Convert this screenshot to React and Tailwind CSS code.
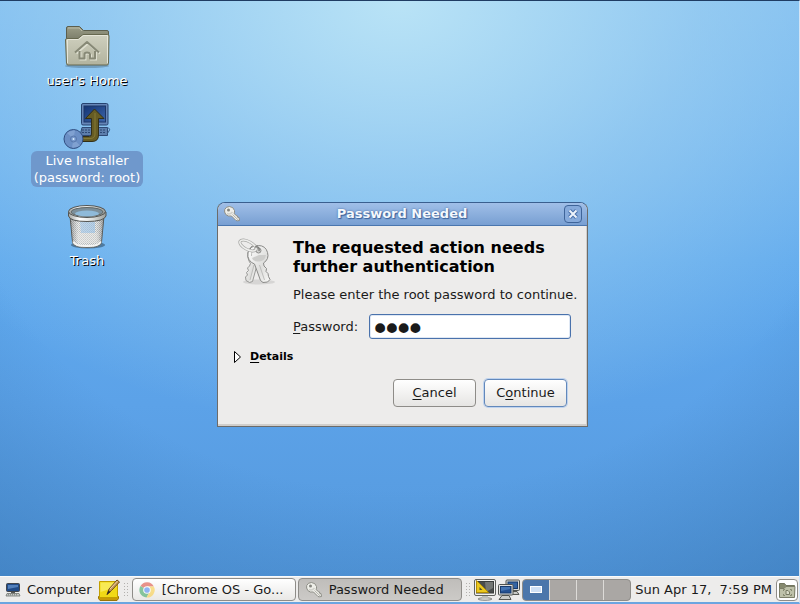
import React from "react";

function FolderHomeIcon() {
  return (
    <svg width="48" height="48" viewBox="0 0 48 48" aria-hidden="true">
      <defs>
        <linearGradient id="folderFront" x1="0" y1="0" x2="0" y2="1">
          <stop offset="0" stopColor="#cfd0bf" />
          <stop offset="1" stopColor="#b2b39e" />
        </linearGradient>
        <linearGradient id="folderBack" x1="0" y1="0" x2="0" y2="1">
          <stop offset="0" stopColor="#9c9e88" />
          <stop offset="1" stopColor="#6d6f5c" />
        </linearGradient>
      </defs>
      <ellipse cx="24" cy="43" rx="22" ry="2" fill="#00000033" />
      <path d="M3.500 22V5Q3.500 3.500 5 3.500H16.500L20.500 7.500H44Q45.500 7.500 45.500 9V22Z" fill="url(#folderBack)" stroke="#5c5e4d" />
      <path d="M5 5H16L19 8" fill="none" stroke="#b9baa6" />
      <path d="M2.500 17Q2.500 15.500 4 15.500H15L20 11.500H44.500Q46 11.500 46 13L45.500 40.500Q45.500 42 44 42H5Q3.500 42 3.500 40.500Z" fill="url(#folderFront)" stroke="#66684f" />
      <path d="M4.500 40V16.500H15.500L20.500 12.500H44.500V40" fill="none" stroke="#e6e6d9" />
      <path d="M12.500 29.500 24 19.500 36 29.500M16.500 28V35.500H21.500V31Q21.500 29.500 24 29.500T27 31V35.500H32V28" fill="none" stroke="#dedfd0" strokeWidth="2" transform="translate(1 1)" />
      <path d="M12 29.500 24 19 36 29.500M16.500 28V35.500H21.500V31Q21.500 29.500 24 29.500T27 31V35.500H32V28" fill="none" stroke="#878976" strokeWidth="2" strokeLinejoin="round" />
    </svg>
  );
}

function InstallerIcon() {
  return (
    <svg width="48" height="48" viewBox="0 0 48 48" aria-hidden="true">
      <defs>
        <linearGradient id="screen" x1="0" y1="0" x2="1" y2="1">
          <stop offset="0" stopColor="#143474" />
          <stop offset="1" stopColor="#3c65a9" />
        </linearGradient>
      </defs>
      <path d="M19 25.500H44.500V33.500H17Z" fill="#5d7eac" stroke="#2e4a75" />
      <path d="M19 28H43M19 30.500H43" stroke="#2e4a75" strokeDasharray="2 1" />
      <path d="M44 26Q48 26 46 29T44 32" fill="none" stroke="#3c5b88" />
      <rect x="18.500" y="1.500" width="26.500" height="21.500" rx="1.500" fill="#6585b7" stroke="#26426f" />
      <rect x="21" y="4" width="21.500" height="16" fill="url(#screen)" stroke="#1c3667" />
      <path d="M14 34.500H26.500Q28.500 34.500 28.500 32V16.500H22.500L31.500 7 41 16.500H35.500V33Q35.500 39.500 29 39.500H14Z" fill="#665c23" stroke="#332f17" />
      <path d="M17 36.500H27Q32 36.500 32 32V11" fill="none" stroke="#837834" />
      <circle cx="10.500" cy="37" r="9.500" fill="#6b8fc5" stroke="#304d80" />
      <path d="M10.500 37 4 31Q8 28 12 28.500ZM10.500 37 17 43.500Q13 46 9 45.500Z" fill="#80a1d1" />
      <circle cx="10.500" cy="37" r="3" fill="#7799cc" stroke="#5777ab" />
      <circle cx="10.500" cy="37" r="1" fill="#d7ecff" />
    </svg>
  );
}

function TrashIcon() {
  return (
    <svg width="48" height="48" viewBox="0 0 48 48" aria-hidden="true">
      <defs>
        <pattern id="mesh" width="2" height="2" patternUnits="userSpaceOnUse">
          <rect width="2" height="2" fill="#e6e7e6" />
          <rect width="1" height="1" fill="#a0a4a5" />
          <rect x="1" y="1" width="1" height="1" fill="#aeb3b5" />
        </pattern>
        <linearGradient id="shade" x1="0" x2="1" y1="0" y2="0">
          <stop offset="0" stopColor="#555555" stopOpacity="0.500" />
          <stop offset="0.250" stopColor="#ffffff" stopOpacity="0.300" />
          <stop offset="0.750" stopColor="#ffffff" stopOpacity="0.200" />
          <stop offset="1" stopColor="#555555" stopOpacity="0.500" />
        </linearGradient>
        <linearGradient id="rim" x1="0" x2="1" y1="0" y2="0">
          <stop offset="0" stopColor="#a3a5a2" />
          <stop offset="0.300" stopColor="#ffffff" />
          <stop offset="0.650" stopColor="#dcdedb" />
          <stop offset="1" stopColor="#999c98" />
        </linearGradient>
      </defs>
      <ellipse cx="25" cy="42" rx="17" ry="3.500" fill="#00000055" />
      <path d="M7 13 9.500 39Q10 44.500 24 44.500T38.500 39L41 13Z" fill="url(#mesh)" stroke="#535654" />
      <path d="M17 19H32V30H18Z" fill="#7db2e2" fillOpacity="0.600" />
      <path d="M13 30H36V40H14Z" fill="#dededa" fillOpacity="0.400" />
      <path d="M7 13 9.500 39Q10 44.500 24 44.500T38.500 39L41 13Z" fill="url(#shade)" />
      <path d="M10.500 38.500Q11 43 24 43T37.500 38.500" fill="none" stroke="#f4f4f2" strokeWidth="2" />
      <path d="M5.500 9V13Q7 18.500 24 18.500T43 13V9Z" fill="url(#rim)" stroke="#525452" />
      <ellipse cx="24" cy="8.500" rx="18.500" ry="6" fill="url(#rim)" stroke="#525452" />
      <ellipse cx="24" cy="9" rx="16" ry="4.500" fill="#7c8f9a" stroke="#616664" />
      <ellipse cx="24" cy="10.500" rx="12" ry="3" fill="#8fbad9" />
    </svg>
  );
}

function KeyIcon() {
  return (
    <svg width="16" height="16" viewBox="0 0 16 16" className="shrink-0" aria-hidden="true">
      <path d="M5.500 0.500Q9.500 0.800 10.500 4.500Q10.800 6.200 10 7.500L12.300 9.500L13.300 9.800L13.500 11.200L15 11.500L15.500 14.500L13.500 14.800L12 14.500L7.500 10Q4 10.800 1.800 8.500Q0 6 0.700 3.500Q2 0.500 5.500 0.500Z" fill="#efefe9" stroke="#8d8d86" />
      <path d="M8.500 8.500 14 13.800" stroke="#b3b2ab" />
      <path d="M3 7.500Q6 9 8.500 6" stroke="#cfcfc9" strokeWidth="1.500" fill="none" />
      <circle cx="4.500" cy="4" r="1.500" fill="#85857f" />
    </svg>
  );
}

function KeyPairIcon() {
  return (
    <svg width="48" height="48" viewBox="0 0 48 48" className="shrink-0" aria-hidden="true">
      <defs>
        <linearGradient id="steel" x1="0" y1="0" x2="1" y2="1">
          <stop offset="0" stopColor="#ffffff" />
          <stop offset="0.600" stopColor="#dededc" />
          <stop offset="1" stopColor="#f8f8f6" />
        </linearGradient>
      </defs>
      <ellipse cx="26" cy="44" rx="16" ry="2.500" fill="#00000018" />
      <path d="M19 8Q12 14 16 23L17.500 25.500 16.500 28 14.500 30 15.500 32.500 13.500 34.500 14.500 37 12.500 39 13 42.500 16.500 44.500 19.500 43.500 24 27Z" fill="url(#steel)" stroke="#989896" />
      <path d="M21 27 17 42" stroke="#bcbcba" />
      <path d="M25.500 7.500A9.500 9.500 0 0 0 21.500 26L27.500 42.500 30 44.500 34.500 44 37 41.500 35.500 38.500 35 35.500 33 33.500 33.500 30.500 31 28 30.500 25A9.500 9.500 0 0 0 25.500 7.500Z" fill="url(#steel)" stroke="#8a8a88" />
      <path d="M26.500 27 31.500 42M23 9.500Q18 12 18.500 18" stroke="#bdbdbb" fill="none" />
      <path d="M19 20 26 17 33 17Q32 23 26 23.500T19 20Z" fill="#cdcdcb" />
      <circle cx="25.500" cy="12.500" r="2.500" fill="#d0d0ce" stroke="#8d8d8b" />
      <ellipse cx="15" cy="7.500" rx="9" ry="4" transform="rotate(28 15 7.500)" fill="none" stroke="#a9a9a7" strokeWidth="3" />
      <ellipse cx="15" cy="7.500" rx="9" ry="4" transform="rotate(28 15 7.500)" fill="none" stroke="#efefed" strokeWidth="1.500" />
      <path d="M22 9Q27 8 26 13" fill="none" stroke="#80807e" strokeWidth="1.500" />
    </svg>
  );
}

function ComputerIcon() {
  return (
    <svg width="16" height="16" viewBox="0 0 16 16" className="shrink-0" aria-hidden="true">
      <rect x="1.500" y="1.500" width="13" height="8" rx="1" fill="#204a87" stroke="#42454a" />
      <path d="M3 3H13V5L3 7Z" fill="#527fba" />
      <path d="M6 10H10V11.500H6Z" fill="#555753" />
      <path d="M2 11.500H14L15 14H1Z" fill="#c9ccc8" stroke="#70736f" strokeWidth="0.800" />
      <path d="M3 12.800H13" stroke="#777a76" strokeDasharray="1 1" />
    </svg>
  );
}

function NotesIcon() {
  return (
    <svg width="24" height="24" viewBox="0 0 24 24" aria-hidden="true">
      <path d="M1.500 18.500H21.500V20.500L20 22.500H3L1.500 20.500Z" fill="#c79a08" stroke="#9a7404" />
      <path d="M2.500 3.500H20.500V19.500H2.500Z" fill="#f1d916" stroke="#c4a000" />
      <path d="M3.500 4.500H19.500V9L3.500 14Z" fill="#f8e955" />
      <path d="M10 16.500 12 11 20 2 22.500 4 14.500 12.500Z" fill="#c79a57" stroke="#6c4b1c" />
      <path d="M9.500 17 11.500 12.500 13.500 14Z" fill="#302a22" />
      <path d="M13 11 20.500 3" stroke="#edd2a2" />
    </svg>
  );
}

function ChromeIcon() {
  return (
    <svg width="16" height="16" viewBox="0 0 16 16" className="shrink-0 opacity-60" aria-hidden="true">
      <path d="M8 8 1.500 4A7.500 7.500 0 0 1 14.800 4.500H8Z" fill="#dd4f41" />
      <path d="M8 8 1.500 4A7.500 7.500 0 0 0 7.500 15.500L11 9.500Z" fill="#3fa866" />
      <path d="M8 4.500H14.800A7.500 7.500 0 0 1 7.500 15.500L11 9.500Z" fill="#fbcf47" />
      <circle cx="8" cy="8" r="3.800" fill="#ffffff" />
      <circle cx="8" cy="8" r="2.800" fill="#4c8bf5" />
    </svg>
  );
}

function ShowDesktopIcon() {
  return (
    <svg width="24" height="22" viewBox="0 0 24 22" aria-hidden="true">
      <ellipse cx="12" cy="20" rx="7" ry="1.300" fill="#dcdcda" stroke="#70726f" strokeWidth="0.800" />
      <path d="M9 16H15V19H9Z" fill="#bbbdb9" />
      <rect x="1.500" y="0.500" width="21" height="16" rx="1.500" fill="#f1f1ef" stroke="#60625f" />
      <rect x="3.500" y="2.500" width="17" height="11.500" fill="#494c4b" stroke="#3a3d3c" />
      <path d="M12 3H20V9L13 13Z" fill="#737673" />
      <path d="M3.500 1.500V13.500H15.500Z" fill="#eac81f" stroke="#b18c04" />
      <path d="M6.500 8V11H9.500Z" fill="#51502d" />
    </svg>
  );
}

function NetworkIcon() {
  return (
    <svg width="24" height="22" viewBox="0 0 24 22" aria-hidden="true">
      <path d="M14 12.500H20L22 15.500H12Z" fill="#cacbc8" stroke="#555753" />
      <rect x="9" y="1" width="13.500" height="10.500" rx="1" fill="#d9dad7" stroke="#4f524f" />
      <rect x="11" y="3" width="9.500" height="6.500" fill="#3465a4" stroke="#173a6d" />
      <path d="M5 16.500H12L14 20.500H2Z" fill="#cacbc8" stroke="#555753" />
      <rect x="1.500" y="5.500" width="14.500" height="10.500" rx="1" fill="#e1e1df" stroke="#4f524f" />
      <rect x="3.500" y="7.500" width="10.500" height="6.500" fill="#245192" stroke="#173a6d" />
      <path d="M4 8H13V10L4 12Z" fill="#4474b2" />
    </svg>
  );
}

function FolderRecycleIcon() {
  return (
    <svg width="18" height="18" viewBox="0 0 18 18" aria-hidden="true">
      <path d="M1.500 6V2.500H6.500L8 4.500H16.500V15.500H1.500Z" fill="#86896e" stroke="#73765f" />
      <path d="M1.500 7.500H6L8 5.500H17L16.500 16.500H1.500Z" fill="#bec1a9" stroke="#7c7e68" />
      <path d="M7 8.500H5.500V10M12 8.500H13.500V10M5.500 13V14.500H7M13.500 13V14.500H12" fill="none" stroke="#85886f" />
      <path d="M8 9.500H10L11.500 11V13.500H8Z" fill="#d9dbc7" stroke="#787b64" />
    </svg>
  );
}

function DesktopItem({ icon, children, labelClass }) {
  return (
    <button type="button" className="flex flex-col items-center">
      {icon}
      <span className={"mt-[1px] rounded-md px-[3px] text-center text-[13px] leading-[17px] text-white " + labelClass}>{children}</span>
    </button>
  );
}

function Grip() {
  return <div className="h-4 w-[6px] shrink-0 bg-[radial-gradient(circle,#b3b1ae_1px,transparent_1px)] bg-[size:3px_3px]" />;
}

function PasswordDialog() {
  return (
    <section
      role="dialog"
      aria-labelledby="dialog-title"
      className="absolute left-[217px] top-[201px] w-[371px] rounded-t-lg border border-[#6c6b69] border-t-[#3a5f8f] bg-[#edeceb]"
    >
      <header className="flex h-[23px] items-center rounded-t-[7px] border-b border-[#4a76ae] bg-linear-to-b from-[#a0bfe8] to-[#789fd2] pl-[6px] pr-[5px]">
        <KeyIcon />
        <h1 id="dialog-title" className="flex-1 text-center text-[13px] font-bold leading-4 text-[#f4f8fd] [text-shadow:0_0_2px_#3b629b,1px_1px_1px_#3b629b]">
          Password Needed
        </h1>
        <button type="button" aria-label="Close" className="flex h-[18px] w-[18px] items-center justify-center rounded-[4px] border border-[#3e6499] bg-[#86aadb]">
          <svg width="12" height="12" viewBox="0 0 12 12" aria-hidden="true">
            <path d="M2.500 2.500 9.500 9.500M9.500 2.500 2.500 9.500" stroke="#4a71aa" strokeWidth="4" />
            <path d="M2.500 2.500 9.500 9.500M9.500 2.500 2.500 9.500" stroke="#eef3fb" strokeWidth="2" />
          </svg>
        </button>
      </header>
      <form className="border-b-2 border-r border-[#d0cecb] pb-[17px] pl-[15px] pr-[14px] pt-3" onSubmit={(e) => e.preventDefault()}>
        <div className="flex gap-3">
          <KeyPairIcon />
          <div className="min-w-0 flex-1">
            <h2 className="text-[16px] font-bold leading-[19px] text-black">
              The requested action needs
              <br />
              further authentication
            </h2>
            <p className="mt-[11px] whitespace-nowrap text-[13px] leading-4">Please enter the root password to continue.</p>
            <div className="mr-[1px] mt-[11px] flex items-center gap-[11px]">
              <label htmlFor="root-password" className="text-[13px] leading-4">
                <span className="underline underline-offset-2">P</span>assword:
              </label>
              <input
                id="root-password"
                type="password"
                defaultValue="root"
                className="h-[25px] min-w-0 flex-1 rounded-[3px] border border-[#4a72ac] bg-white px-1 pt-[2px] text-[20px] text-[#1a1a1a] outline-none ring-1 ring-inset ring-[#dfe8f4] [-webkit-text-stroke:4px_#1a1a1a]"
              />
            </div>
          </div>
        </div>
        <button type="button" className="mt-[10px] flex items-center gap-2 text-[11px] font-bold leading-4 text-black">
          <svg width="9" height="14" viewBox="0 0 9 14" aria-hidden="true">
            <path d="M1.500 1.500V12.500L7.500 7Z" fill="#ffffff" stroke="#000000" />
          </svg>
          <span>
            <span className="underline underline-offset-2">D</span>etails
          </span>
        </button>
        <div className="mr-[5px] mt-[14px] flex justify-end gap-2">
          <button type="button" className="h-7 w-[83px] rounded-[4px] border border-[#8e8c88] bg-linear-to-b from-white to-[#e6e5e3] text-[13px]">
            <span className="underline underline-offset-2">C</span>ancel
          </button>
          <button type="submit" className="h-7 w-[83px] rounded-[4px] border border-[#6288bb] bg-linear-to-b from-white to-[#e6e5e3] text-[13px] ring-1 ring-[#bfd3ee]">
            C<span className="underline underline-offset-2">o</span>ntinue
          </button>
        </div>
      </form>
    </section>
  );
}

function Taskbar() {
  return (
    <footer className="flex h-[26px] shrink-0 items-center border-t border-[#fbfbfa] bg-[#edeceb] pl-[2px] pr-[1px] text-[13px]">
      <button type="button" className="flex items-center gap-[6px] pl-[3px]">
        <ComputerIcon />
        Computer
      </button>
      <button type="button" aria-label="Notes" className="ml-[5px]">
        <NotesIcon />
      </button>
      <div className="ml-[2px]">
        <Grip />
      </div>
      <div className="ml-[3px] flex min-w-0 flex-1 gap-[2px]">
        <button type="button" className="flex h-[23px] w-[164px] items-center gap-[7px] rounded-[4px] border border-[#8e8c88] bg-linear-to-b from-white to-[#e9e8e6] px-[6px]">
          <ChromeIcon />
          <span className="whitespace-nowrap">[Chrome OS - Go...</span>
        </button>
        <button type="button" aria-pressed="true" className="flex h-[23px] w-[164px] items-center gap-[7px] rounded-[4px] border border-[#8e8c88] bg-linear-to-b from-[#bfbdba] to-[#cccac7] px-[7px]">
          <KeyIcon />
          <span className="whitespace-nowrap">Password Needed</span>
        </button>
      </div>
      <Grip />
      <button type="button" aria-label="Show desktop" className="ml-[2px]">
        <ShowDesktopIcon />
      </button>
      <button type="button" aria-label="Network">
        <NetworkIcon />
      </button>
      <div className="ml-[1px] flex h-[22px] w-[109px] overflow-hidden rounded-[4px] border border-[#8e8c88] bg-[#aaa7a4]">
        <button type="button" aria-label="Workspace 1" className="flex flex-1 items-center justify-center bg-[#4b76ab]">
          <span className="h-[7px] w-3 border border-white bg-[#cfe0f5]" />
        </button>
        <button type="button" aria-label="Workspace 2" className="flex-1 border-l border-[#dddbd8]" />
        <button type="button" aria-label="Workspace 3" className="flex-1 border-l border-[#dddbd8]" />
        <button type="button" aria-label="Workspace 4" className="flex-1 border-l border-[#dddbd8]" />
      </div>
      <time className="ml-1 whitespace-pre">Sun Apr 17,  7:59 PM</time>
      <button type="button" aria-label="Trash" className="ml-1 flex h-[22px] w-[22px] items-center justify-center rounded-[4px] border border-[#8e8c88] bg-white">
        <FolderRecycleIcon />
      </button>
    </footer>
  );
}

export default function App() {
  return (
    <div className="flex min-h-screen flex-col border-b-2 border-r border-t border-b-[#6ba5e0] border-r-[#d3e4f5] border-t-[#1f3c63] bg-[#5aa0e6] font-['DejaVu_Sans',sans-serif] text-[#1a1a1a]">
      <main className="relative flex-1 bg-[radial-gradient(ellipse_75%_75%_at_50%_0%,#b9e3f6_0%,#a6d5f299_50%,transparent_100%),radial-gradient(ellipse_90%_100%_at_50%_25%,transparent_60%,#2c6aa680_100%),linear-gradient(to_bottom,#78b9f0_0%,#5fa9ed_45%,#5ca2e8_70%,#5599dd_100%)]">
        <nav aria-label="Desktop" className="flex w-[174px] flex-col items-center pt-[22px]">
          <DesktopItem icon={<FolderHomeIcon />} labelClass="[text-shadow:1px_1px_0_#000]">
            user's Home
          </DesktopItem>
          <div className="mt-[13px]">
            <DesktopItem icon={<InstallerIcon />} labelClass="bg-[#6f98cc] py-[1px]">
              Live Installer
              <br />
              (password: root)
            </DesktopItem>
          </div>
          <div className="mt-4">
            <DesktopItem icon={<TrashIcon />} labelClass="[text-shadow:1px_1px_0_#000]">
              Trash
            </DesktopItem>
          </div>
        </nav>
        <PasswordDialog />
      </main>
      <Taskbar />
    </div>
  );
}
